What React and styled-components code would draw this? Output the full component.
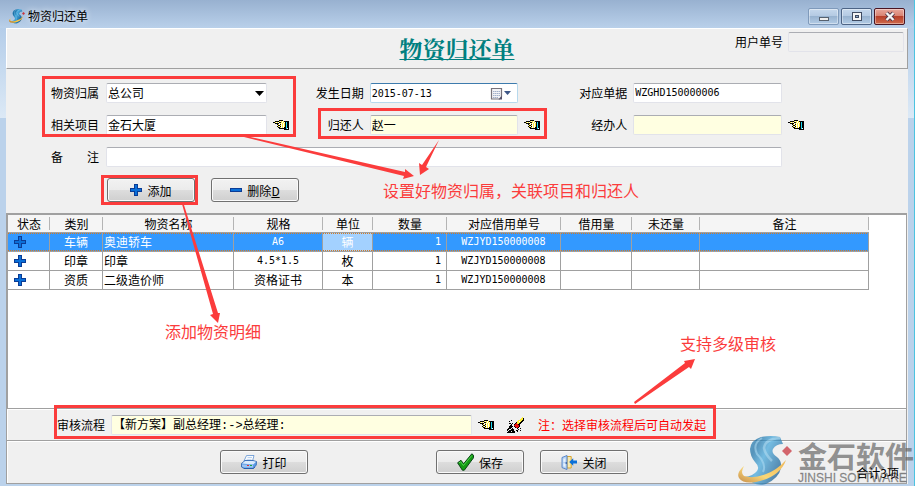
import React from 'react'
import { useState } from 'react'
import styled, { createGlobalStyle, css } from 'styled-components'

const GlobalStyle = createGlobalStyle`
    *, *::before, *::after { box-sizing: border-box; }
    body { margin: 0; }
    body, input, select, button {
        font-family: "Noto Sans CJK SC", "Liberation Sans", sans-serif;
        font-size: 12px;
        color: #000;
    }
`
const mono = css`
    font-family: "DejaVu Sans Mono", "Noto Sans CJK SC", monospace;
    font-size: 10px;
`
const Frame = styled.div`
    position: relative;
    display: flex;
    flex-direction: column;
    min-height: 100vh;
    padding: 0 6px 2px 6px;
    overflow: hidden;
    background:
        linear-gradient(#98b1d0, #b9d0ea) 0 0 / 100% 28px no-repeat,
        linear-gradient(#b4cde9, #dce9f6) 0 28px / 100% 90px no-repeat,
        #bbd2eb;
    border-right: 1px solid #4cc3e0;
`
const TitleBar = styled.header`
    display: flex;
    align-items: center;
    height: 28px;
    padding: 4px 3px 0 3px;
    gap: 3px;
`
const Caption = styled.h1`
    flex: 1;
    margin: 0;
    font-size: 12px;
    font-weight: 400;
    line-height: 16px;
    text-shadow: 0 0 6px #fff;
`
const Controls = styled.div`
    display: flex;
    gap: 2px;
`
const Control = styled.button`
    display: flex;
    align-items: center;
    justify-content: center;
    width: 31px;
    height: 17px;
    padding: 0;
    border: 1px solid ${({ $close, $dim }) => ($close ? '#4a1522' : $dim ? '#7f9abb' : '#4d6485')};
    border-radius: 2px;
    box-shadow: inset 0 0 0 1px rgba(255, 255, 255, 0.4);
    background: ${({ $close }) =>
        $close
            ? 'linear-gradient(#e8a79c 0, #d98473 45%, #b8402b 50%, #cf6a4c 100%)'
            : 'linear-gradient(#c6d8ec 0, #b4cae3 45%, #98b3d0 50%, #b3cce6 100%)'};
`
const Body = styled.main`
    display: flex;
    flex: 1;
    flex-direction: column;
    background: #f0f0f0;
`
const Heading = styled.section`
    display: grid;
    grid-template-columns: 1fr auto 1fr;
    height: 41px;
    border-top: 1px solid #fff;
    border-left: 1px solid #fff;
    border-right: 1px solid #a0a0a0;
    border-bottom: 1px solid #a0a0a0;
`
const FormTitle = styled.h2`
    grid-column: 2;
    align-self: center;
    margin: 0;
    font-family: "Noto Serif CJK SC", "Noto Sans CJK SC", serif;
    font-size: 23px;
    font-weight: 700;
    line-height: 30px;
    color: #008080;
    text-decoration: underline;
    text-decoration-thickness: 1px;
    text-underline-offset: 1px;
`
const UserNo = styled.div`
    display: flex;
    align-items: center;
    align-self: start;
    justify-self: end;
    gap: 5px;
    padding: 3px;
`
const Form = styled.form`
    padding: 14px 104px 11px 45px;
`
const Fields = styled.div`
    display: grid;
    grid-template-columns: 49px minmax(0, 161fr) 16px 69px minmax(0, 149fr) 16px 81px minmax(0, 149fr) 16px;
    grid-auto-rows: 20px;
    align-items: center;
    gap: 12px 6px;
`
const Label = styled.label`
    text-align: ${({ $left }) => ($left ? 'left' : 'right')};
    white-space: nowrap;
    line-height: 20px;
`
const Input = styled.input`
    width: ${({ $width }) => $width || '100%'};
    min-width: 0;
    height: 20px;
    padding: 0 1px 2px;
    grid-column: ${({ $span }) => ($span ? `span ${$span}` : 'auto')};
    border: 1px solid #e2e3ea;
    border-top-color: #abadb3;
    border-radius: 2px;
    outline: none;
    background: ${({ $tint, disabled }) => (disabled ? '#f0f0f0' : $tint ? '#ffffe1' : '#fff')};
    ${({ $mono }) => $mono && mono}
`
const FlowInput = styled(Input)`
    flex: 0 1 361px;
    font-family: "Liberation Mono", "Noto Sans CJK SC", monospace;
`
const SelectBox = styled.div`
    display: grid;
    align-items: center;
    height: 20px;

    & > * {
        grid-area: 1 / 1;
    }

    & > svg {
        justify-self: end;
        margin-right: 3px;
        pointer-events: none;
    }
`
const Select = styled.select`
    width: 100%;
    height: 20px;
    padding: 0 1px 2px;
    appearance: none;
    border: 1px solid #e2e3ea;
    border-top-color: #abadb3;
    border-radius: 2px;
    outline: none;
    background: #fff;
`
const DateBox = styled.div`
    display: flex;
    align-items: center;
    height: 20px;
    padding-right: 5px;
    border: 1px solid #b7d9ed;
    border-top-color: #3d7bad;
    border-radius: 2px;
    background: #fff;
`
const DateInput = styled.input`
    flex: 1;
    min-width: 0;
    padding: 0 1px;
    border: 0;
    outline: none;
    background: transparent;
    ${mono}
`
const IconButton = styled.button`
    display: flex;
    padding: 0;
    border: 0;
    background: none;
    cursor: pointer;
`
const Buttons = styled.div`
    display: flex;
    gap: 16px;
    margin: 11px 0 0 56px;
`
const Button = styled.button`
    display: flex;
    align-items: center;
    justify-content: center;
    gap: 5px;
    width: 88px;
    height: 24px;
    padding: 0;
    border: 1px solid #707070;
    border-radius: 3px;
    box-shadow: inset 0 0 0 1px #fafafa;
    background: linear-gradient(#f2f2f2 0, #ebebeb 50%, #dddddd 50%, #cfcfcf 100%);
    margin-right: ${({ $apart }) => ($apart ? '112px' : '0')};
`
const GridPanel = styled.section`
    flex: 1;
    margin-right: 1px;
    border: 2px solid #a0a0a0;
    border-right-width: 1px;
    border-bottom: 0;
    background: #fff;
`
const Table = styled.table`
    table-layout: fixed;
    width: 861px;
    border-spacing: 0;
`
const Th = styled.th`
    height: 18px;
    padding: 0;
    border-bottom: 1px solid #a0a0a0;
    background:
        linear-gradient(#b4b4b4, #b4b4b4) 100% 2px / 1px 13px no-repeat,
        #f5f5f5;
    font-weight: 400;
    line-height: 16px;
`
const Td = styled.td`
    height: 19px;
    padding: 0 ${({ $align }) => ($align === 'right' ? '5px' : '1px')} 1px;
    border-right: 1px solid #a0a0a0;
    border-bottom: 1px solid #a0a0a0;
    line-height: 16px;
    white-space: nowrap;
    text-align: ${({ $align }) => $align || 'center'};
    ${({ $mono }) => $mono && mono}

    & > svg {
        display: block;
        margin-left: 5px;
    }
`
const dots = 'repeating-linear-gradient(90deg, #d97a1e 0 1px, transparent 1px 2px)'

const Tr = styled.tr`
    ${({ $selected }) =>
        $selected &&
        css`
            & > td {
                background:
                    ${dots} 0 0 / 100% 1px no-repeat padding-box,
                    ${dots} 0 100% / 100% 1px no-repeat padding-box,
                    #3399ff;
                color: #fff;
            }
            & > td:nth-child(5) {
                background-color: #a3d1ff;
            }
        `}
`
const Approval = styled.section`
    display: flex;
    align-items: center;
    height: 32px;
    padding-left: 50px;
    margin-right: 1px;
    gap: 6px;
    border: 1px solid #a0a0a0;
    border-bottom: 0;
    box-shadow: inset 1px 1px 0 #fff;
`
const Eraser = styled(IconButton)`
    margin: 0 8px 0 7px;
`
const Note = styled.span`
    color: #f00;
    white-space: nowrap;
`
const Footer = styled.footer`
    display: flex;
    gap: 16px;
    padding: 9px 7px 9px 213px;
    margin-right: 1px;
    border: 1px solid #a0a0a0;
    box-shadow: inset 1px 1px 0 #fff;
`
const Total = styled.span`
    z-index: 2;
    align-self: flex-end;
    margin: 0 0 -8px auto;
    line-height: 18px;
`
const Watermark = styled.div`
    position: absolute;
    right: 0;
    bottom: 0;
    display: flex;
    align-items: flex-end;
    gap: 6px;
    z-index: 1;
    pointer-events: none;
`
const Brand = styled.div`
    display: flex;
    flex-direction: column;
    color: rgba(96, 96, 96, 0.68);
    font-weight: 700;
    white-space: nowrap;
`
const BrandName = styled.span`
    font-size: 29px;
    line-height: 30px;
`
const BrandLatin = styled.span`
    font-family: "Liberation Sans", sans-serif;
    font-size: 12px;
    font-weight: 400;
    line-height: 16px;
    -webkit-text-stroke: 0.3px;
`
const Overlay = styled.svg`
    position: absolute;
    top: 0;
    left: 0;
    z-index: 3;
    pointer-events: none;
`
const Callout = styled.span`
    position: absolute;
    left: ${({ $x }) => $x}px;
    top: ${({ $y }) => $y}px;
    z-index: 3;
    font-size: 16px;
    font-weight: 400;
    line-height: 20px;
    color: #fb3c3c;
    white-space: nowrap;
`

const colors = { k: '#000', y: '#ffef3a', w: '#fff', c: '#19d8f0', r: '#e81010' }

const hand = [
    '......kkkk......',
    '..kkkkywywykkkkk',
    'kkywywkkywywkckk',
    '..kkkkwywywykckk',
    '....kywkwywykckk',
    '.....kkywywykckk',
    '....kywkwywykckk',
    '.....kkywywkkckk',
    '......kkkkkkkcwk',
    '...........kkkkk',
]

const eraser = [
    '...............y.',
    '..............yyk',
    '.............yyyk',
    '....k......yyyykk',
    '..k.......yywykk.',
    '.........kyyykk..',
    '..kk.k..kryykk...',
    '....k..krrrkk....',
    '...kk..rrrrrk....',
    '..kkkk.krrrrk....',
    '..kkk...krrk.....',
    '.kkk.k....k..k...',
    'kk..kkk....k.....',
    'k.kkkkk..kk..k...',
    '.kkk.kkk..k......',
    'kkkkkkkk.........',
]

// every character is one pixel of the bitmap
const Bitmap = ({ rows }) => (
    <svg width={rows[0].length} height={rows.length} shapeRendering="crispEdges" aria-hidden="true">
        {rows.map((row, y) =>
            [...row].map((c, x) => c !== '.' && <rect key={`${x}-${y}`} x={x} y={y} width="1" height="1" fill={colors[c]} />)
        )}
    </svg>
)

const Plus = () => (
    <svg width="12" height="12" viewBox="0 0 12 12" shapeRendering="crispEdges" aria-hidden="true">
        <path d="M4 0h4v4h4v4H8v4H4V8H0V4h4z" fill="#0b3c95" />
        <path d="M5 1h2v4h4v2H7v4H5V7H1V5h4z" fill="#0a6fd8" />
    </svg>
)

const Minus = () => (
    <svg width="12" height="12" viewBox="0 0 12 12" shapeRendering="crispEdges" aria-hidden="true">
        <path d="M0 4h12v4H0z" fill="#0b3c95" />
        <path d="M1 5h10v2H1z" fill="#0a6fd8" />
    </svg>
)

const Printer = () => (
    <svg width="16" height="15" viewBox="0 0 16 15" aria-hidden="true">
        <path d="M5.500 .6l7.500-.1-1.500 5.500H3z" fill="#fff" stroke="#5b8fd0" strokeWidth="0.8" />
        <path d="M6.500 2.500h4.500M5.500 4.300h5" stroke="#a9c6ea" strokeWidth="0.8" />
        <path d="M.5 8.500L4 5.500h8l3.500 1-.2 3.500-3 3.500H3L.5 12z" fill="#5b9be6" stroke="#1f57a8" strokeWidth="0.7" />
        <path d="M1 8.500l3.200-2.500h7.600l3.200.8-2.800 2.700z" fill="#dcebfc" />
        <path d="M1 9.500l11 .6v2.600L3.200 12.500 1 11.500z" fill="#9cc5f4" />
        <path d="M3 13.500l9.500-.1 1.500-1.400" fill="none" stroke="#1f57a8" strokeWidth="0.8" />
        <path d="M6 10.500h2" stroke="#e23030" />
        <path d="M9 10.500h2" stroke="#1fa53a" />
    </svg>
)

const Check = () => (
    <svg width="17" height="18" viewBox="0 0 17 18" aria-hidden="true">
        <path d="M.6 9.800L4 7.300l2.600 3.500L14.800.8l1.700 1.400v2.600L7.300 17.200H5.400z" fill="#149b14" stroke="#0a4416" strokeWidth="1" />
        <path d="M2 9.800l1.700-1 2.700 3.700L14.800 2.500" fill="none" stroke="#4fd24f" strokeWidth="1" />
    </svg>
)

const Door = () => (
    <svg width="16" height="15" viewBox="0 0 16 15" aria-hidden="true">
        <path d="M6 1.5h4.2v11.5H6z" fill="#f7e9b0" stroke="#d6a432" />
        <path d="M1 2.5L6 .5v14L1 12.6z" fill="#b7d3f4" stroke="#4f7fc4" strokeWidth="0.9" />
        <path d="M2.4 4l2-.8v3.5l-2 .3zM2.4 8.3l2 .2v3.3l-2-.6z" fill="#e6f1fd" />
        <path d="M5.2 7v2" stroke="#274f94" />
        <path d="M8.2 7l4-3.8v2.3H16v3h-3.8v2.3z" fill="#0a6fd8" />
    </svg>
)

const Calendar = () => (
    <svg width="22" height="13" viewBox="0 0 22 13" aria-hidden="true">
        <path d="M1.5 1.500h10v8L9.500 12h-8z" fill="#f3f3f6" stroke="#77737b" strokeWidth="1.200" />
        <path d="M3 4.500h7M3 6.500h7M3 8.500h7M3 10.500h5" stroke="#a3b1ca" strokeDasharray="1.500 .5" />
        <path d="M8.500 12.500l3.500-3.500v3.500z" fill="#55506a" />
        <path d="M14 4h7l-3.5 4z" fill="#3e5787" />
    </svg>
)

const Swoosh = ({ width, height, id, opacity }) => (
    <svg width={width} height={height} viewBox="0 0 54 50" opacity={opacity} aria-hidden="true">
        <defs>
            <linearGradient id={`${id}-s`} x1="0" y1="0" x2="1" y2="0.6">
                <stop offset="0" stopColor="#2f8fc4" />
                <stop offset="0.3" stopColor="#1c70a6" />
                <stop offset="0.55" stopColor="#45a8dc" />
                <stop offset="1" stopColor="#14598f" />
            </linearGradient>
            <linearGradient id={`${id}-g`} x1="0" y1="1" x2="1" y2="0">
                <stop offset="0" stopColor="#b8690c" />
                <stop offset="0.4" stopColor="#ffcf4a" />
                <stop offset="1" stopColor="#f0a21c" />
            </linearGradient>
        </defs>
        <path
            d="M23 1Q33-1 42 1L45 8Q38 8 35 13Q33 17 39 21Q44 25 43 32Q41 42 28 48Q21 50 15 47L7 41Q15 40 19 35Q22 31 17 26Q12 20 12 13Q13 4 23 1Z"
            fill={`url(#${id}-s)`}
        />
        <path d="M24 2Q14 8 19 18Q29 28 25 36" fill="none" stroke="#8fd0f2" strokeWidth="2" opacity="0.6" />
        <path d="M42 2Q27 3 26 12Q27 18 34 25" fill="none" stroke="#a8dcf6" strokeWidth="2.500" opacity="0.5" />
        <path d="M6 30Q-2 37 1 42Q5 48 18 46Q42 41 48 24Q39 34 28 38Q16 43 6 40Q2 37 6 30Z" fill={`url(#${id}-g)`} />
        <path d="M49 10l5 5-5 5-5-5z" fill="#c8303a" />
    </svg>
)

const columns = [
    ['状态', 42],
    ['类别', 53],
    ['物资名称', 131],
    ['规格', 89],
    ['单位', 50],
    ['数量', 74],
    ['对应借用单号', 114],
    ['借用量', 71],
    ['未还量', 68],
    ['备注', 169],
]

const items = [
    { type: '车辆', name: '奥迪轿车', spec: 'A6', unit: '辆', count: 1, source: 'WZJYD150000008' },
    { type: '印章', name: '印章', spec: '4.5*1.5', unit: '枚', count: 1, source: 'WZJYD150000008' },
    { type: '资质', name: '二级造价师', spec: '资格证书', unit: '本', count: 1, source: 'WZJYD150000008' },
]

const Picker = ({ label }) => (
    <IconButton type="button" aria-label={label}>
        <Bitmap rows={hand} />
    </IconButton>
)

function App() {
    const [selected, setSelected] = useState(0)
    return (
        <Frame>
            <GlobalStyle />
            <TitleBar>
                <Swoosh width={16} height={15} id="app" />
                <Caption>物资归还单</Caption>
                <Controls>
                    <Control $dim aria-label="最小化">
                        <svg width="12" height="11">
                            <rect x="1.5" y="6.5" width="9" height="3" fill="#eee" stroke="#56616f" />
                        </svg>
                    </Control>
                    <Control aria-label="最大化">
                        <svg width="12" height="11">
                            <rect x="1.5" y="1.5" width="9" height="8" fill="#f4f4f4" stroke="#3f4b61" />
                            <rect x="4.5" y="4.5" width="3" height="2" fill="#8fa9c9" stroke="#3f4b61" />
                        </svg>
                    </Control>
                    <Control $close aria-label="关闭窗口">
                        <svg width="12" height="11">
                            <path d="M2.5 2l7 7M9.5 2l-7 7" stroke="#50394a" strokeWidth="4" />
                            <path d="M2.5 2l7 7M9.5 2l-7 7" stroke="#f6f6f6" strokeWidth="2.4" />
                        </svg>
                    </Control>
                </Controls>
            </TitleBar>
            <Body>
                <Heading>
                    <FormTitle>物资归还单</FormTitle>
                    <UserNo>
                        <Label htmlFor="userNo">用户单号</Label>
                        <Input id="userNo" $width="116px" disabled />
                    </UserNo>
                </Heading>
                <Form onSubmit={(e) => e.preventDefault()}>
                    <Fields>
                        <Label $left htmlFor="owner">物资归属</Label>
                        <SelectBox>
                            <Select id="owner" defaultValue="总公司">
                                <option>总公司</option>
                            </Select>
                            <svg width="9" height="5"><path d="M0 0h9L4.500 5z" /></svg>
                        </SelectBox>
                        <span />
                        <Label htmlFor="date">发生日期</Label>
                        <DateBox>
                            <DateInput id="date" defaultValue="2015-07-13" />
                            <IconButton type="button" aria-label="选择日期"><Calendar /></IconButton>
                        </DateBox>
                        <span />
                        <Label htmlFor="bill">对应单据</Label>
                        <Input id="bill" $mono defaultValue="WZGHD150000006" />
                        <span />

                        <Label $left htmlFor="project">相关项目</Label>
                        <Input id="project" defaultValue="金石大厦" />
                        <Picker label="选择项目" />
                        <Label htmlFor="returner">归还人</Label>
                        <Input id="returner" $tint defaultValue="赵一" />
                        <Picker label="选择归还人" />
                        <Label htmlFor="handler">经办人</Label>
                        <Input id="handler" $tint />
                        <Picker label="选择经办人" />

                        <Label $left htmlFor="remark">备　　注</Label>
                        <Input id="remark" $span={7} />
                    </Fields>
                    <Buttons>
                        <Button type="button"><Plus />添加</Button>
                        <Button type="button"><Minus /><span>删除<u>D</u></span></Button>
                    </Buttons>
                </Form>
                <GridPanel>
                    <Table>
                        <colgroup>
                            {columns.map(([title, width]) => <col key={title} width={width} />)}
                        </colgroup>
                        <thead>
                            <tr>{columns.map(([title]) => <Th key={title}>{title}</Th>)}</tr>
                        </thead>
                        <tbody>
                            {items.map((item, i) => (
                                <Tr key={item.name} $selected={i === selected} onClick={() => setSelected(i)}>
                                    <Td><Plus /></Td>
                                    <Td>{item.type}</Td>
                                    <Td $align="left">{item.name}</Td>
                                    <Td $mono={/^[\w.*]+$/.test(item.spec)}>{item.spec}</Td>
                                    <Td>{item.unit}</Td>
                                    <Td $mono $align="right">{item.count}</Td>
                                    <Td $mono>{item.source}</Td>
                                    <Td />
                                    <Td />
                                    <Td />
                                </Tr>
                            ))}
                        </tbody>
                    </Table>
                </GridPanel>
                <Approval>
                    <Label $left htmlFor="flow">审核流程</Label>
                    <FlowInput id="flow" $tint defaultValue="【新方案】副总经理:->总经理:" />
                    <Picker label="选择审核流程" />
                    <Eraser type="button" aria-label="清除审核流程"><Bitmap rows={eraser} /></Eraser>
                    <Note>注：选择审核流程后可自动发起</Note>
                </Approval>
                <Footer>
                    <Button type="button" $apart><Printer />打印</Button>
                    <Button type="button"><Check />保存</Button>
                    <Button type="button"><Door />关闭</Button>
                    <Total>合计3项</Total>
                </Footer>
            </Body>
            <Watermark>
                <Swoosh width={54} height={50} id="mark" opacity={0.72} />
                <Brand>
                    <BrandName>金石软件</BrandName>
                    <BrandLatin>JINSHI SOFTWARE</BrandLatin>
                </Brand>
            </Watermark>
            <Overlay width="915" height="486" aria-hidden="true">
                <g fill="none" stroke="#fb3c3c" strokeWidth="3">
                    <rect x="43.5" y="77.5" width="251" height="58" />
                    <rect x="319.5" y="109.5" width="226" height="28" />
                    <rect x="102.5" y="176.500" width="94" height="27" />
                    <rect x="55.5" y="406.5" width="659" height="31" />
                </g>
                <g fill="#fb3c3c">
                    <path d="M240 136L246 136L405 172L405 169L414 176L403 179L404 176Z" />
                    <path d="M439 140L426 167L429 169L420 175L419 163L422 165Z" />
                    <path d="M182 204L184 205L218 313L220 313L218 323L210 315L213 314Z" />
                    <path d="M634 402L685 363L684 361L695 359L691 369L689 367L635 404Z" />
                </g>
            </Overlay>
            <Callout $x={383} $y={180}>设置好物资归属，关联项目和归还人</Callout>
            <Callout $x={165} $y={321}>添加物资明细</Callout>
            <Callout $x={680} $y={333}>支持多级审核</Callout>
        </Frame>
    )
}

export default App
